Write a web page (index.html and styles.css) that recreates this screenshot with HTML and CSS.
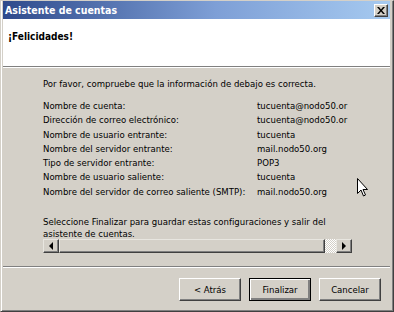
FILE: index.html
```html
<!DOCTYPE html>
<html lang="es">
<head>
    <meta charset="UTF-8">
    <title>Asistente de cuentas</title>
    <link rel="stylesheet" href="styles.css">
</head>
<body>
    <div class="window">
        <div class="titlebar">
            <span class="title">Asistente de cuentas</span>
            <span class="close-btn">
                <svg width="8" height="7" viewBox="0 0 8 7"><path d="M0 0h2l2 2.5L6 0h2L5 3.5 8 7H6L4 4.5 2 7H0l3-3.5z" fill="#000"/></svg>
            </span>
        </div>

        <header class="page-header">
            <h1>¡Felicidades!</h1>
        </header>

        <section class="content">
            <p class="intro">Por favor, compruebe que la información de debajo es correcta.</p>

            <div class="summary">
                <span>Nombre de cuenta:</span><span>tucuenta@nodo50.or</span>
                <span>Dirección de correo electrónico:</span><span>tucuenta@nodo50.or</span>
                <span>Nombre de usuario entrante:</span><span>tucuenta</span>
                <span>Nombre del servidor entrante:</span><span>mail.nodo50.org</span>
                <span>Tipo de servidor entrante:</span><span>POP3</span>
                <span>Nombre de usuario saliente:</span><span>tucuenta</span>
                <span>Nombre del servidor de correo saliente (SMTP):</span><span>mail.nodo50.org</span>
            </div>

            <p class="note">Seleccione Finalizar para guardar estas configuraciones y salir del asistente de cuentas.</p>

            <div class="hscroll">
                <span class="scroll-btn"><i class="arrow-left"></i></span>
                <span class="thumb"></span>
                <span class="track"></span>
                <span class="scroll-btn"><i class="arrow-right"></i></span>
            </div>
        </section>

        <footer class="buttons">
            <button>&lt; Atrás</button>
            <button class="default">Finalizar</button>
            <button>Cancelar</button>
        </footer>

        <svg class="cursor" width="12" height="19" viewBox="0 0 12 19">
            <path d="M0.5 0.5V15.5L4 12L6.5 18L8.5 17L6 11.5H10.5Z" fill="#fff" stroke="#000" stroke-width="1"/>
        </svg>
    </div>
</body>
</html>
```

FILE: styles.css
```css
body {
    margin: 0;
    font-family: "DejaVu Sans Condensed", "DejaVu Sans", sans-serif;
    font-stretch: condensed;
    font-size: 9.5px;
    color: #000;
}

.window {
    position: relative;
    width: 394px;
    height: 312px;
    box-sizing: border-box;
    background-color: #d4d0c8;
    border-top: 1px solid #d4d0c8;
    border-left: 1px solid #d4d0c8;
    border-right: 1px solid #404040;
    border-bottom: 1px solid #404040;
    box-shadow: inset 1px 0 #fff, inset -1px -1px #808080;
    padding: 0 3px 2px 2px;
    overflow: hidden;
}

.titlebar {
    height: 18px;
    display: flex;
    align-items: center;
    justify-content: space-between;
    padding: 0 2px 0 2px;
    background: linear-gradient(to right, #2e4a8c, #7e9fd6 55%, #a6caf0);
}

.title {
    color: #fff;
    font-weight: bold;
    font-size: 10.5px;
}

.close-btn {
    width: 12px;
    height: 11px;
    display: flex;
    align-items: center;
    justify-content: center;
    background-color: #d4d0c8;
    border: 1px solid;
    border-color: #fff #404040 #404040 #fff;
    box-shadow: inset -1px -1px #808080;
}

.page-header {
    height: 47px;
    background-color: #fff;
    border-bottom: 1px solid #808080;
    padding-left: 5px;
}

.page-header h1 {
    margin: 0;
    padding-top: 12px;
    font-size: 10px;
    font-weight: bold;
}

.content {
    border-top: 1px solid #fff;
    padding: 9px 0 0 40px;
}

.intro {
    margin: 0;
    line-height: 14px;
}

.summary {
    margin-top: 8px;
    display: grid;
    grid-template-columns: 214px auto;
    line-height: 14.3px;
    white-space: nowrap;
}

.note {
    margin: 17px 0 0 0;
    width: 300px;
    line-height: 12px;
}

.hscroll {
    margin-top: -1px;
    width: 309px;
    height: 14px;
    display: flex;
}

.scroll-btn {
    width: 14px;
    height: 12px;
    display: flex;
    align-items: center;
    justify-content: center;
    background-color: #d4d0c8;
    border: 1px solid;
    border-color: #e8e6e0 #404040 #404040 #e8e6e0;
    box-shadow: inset -1px -1px #808080;
}

.arrow-left {
    width: 0;
    height: 0;
    border-top: 4px solid transparent;
    border-bottom: 4px solid transparent;
    border-right: 4px solid #000;
}

.arrow-right {
    width: 0;
    height: 0;
    border-top: 4px solid transparent;
    border-bottom: 4px solid transparent;
    border-left: 4px solid #000;
}

.thumb {
    width: 264px;
    height: 12px;
    background-color: #d4d0c8;
    border: 1px solid;
    border-color: #e8e6e0 #404040 #404040 #e8e6e0;
    box-shadow: inset -1px -1px #808080;
}

.track {
    flex: 1;
    background: repeating-conic-gradient(#fff 0 25%, #d4d0c8 0 50%) 0 0 / 2px 2px;
}

.buttons {
    position: absolute;
    left: 2px;
    right: 3px;
    top: 265px;
    border-top: 1px solid #808080;
    box-shadow: inset 0 1px #fff;
    display: flex;
    justify-content: flex-end;
    gap: 8px;
    padding: 11px 9px 0 0;
}

button {
    width: 62px;
    height: 23px;
    font-family: inherit;
    font-stretch: condensed;
    font-size: 9.5px;
    background-color: #d4d0c8;
    border: 1px solid;
    border-color: #fff #404040 #404040 #fff;
    box-shadow: inset -1px -1px #808080;
    padding: 0;
}

button.default {
    border-color: #000;
    box-shadow: inset 1px 1px #fff, inset -2px -2px #808080;
}

.cursor {
    position: absolute;
    left: 356px;
    top: 177px;
}
```
